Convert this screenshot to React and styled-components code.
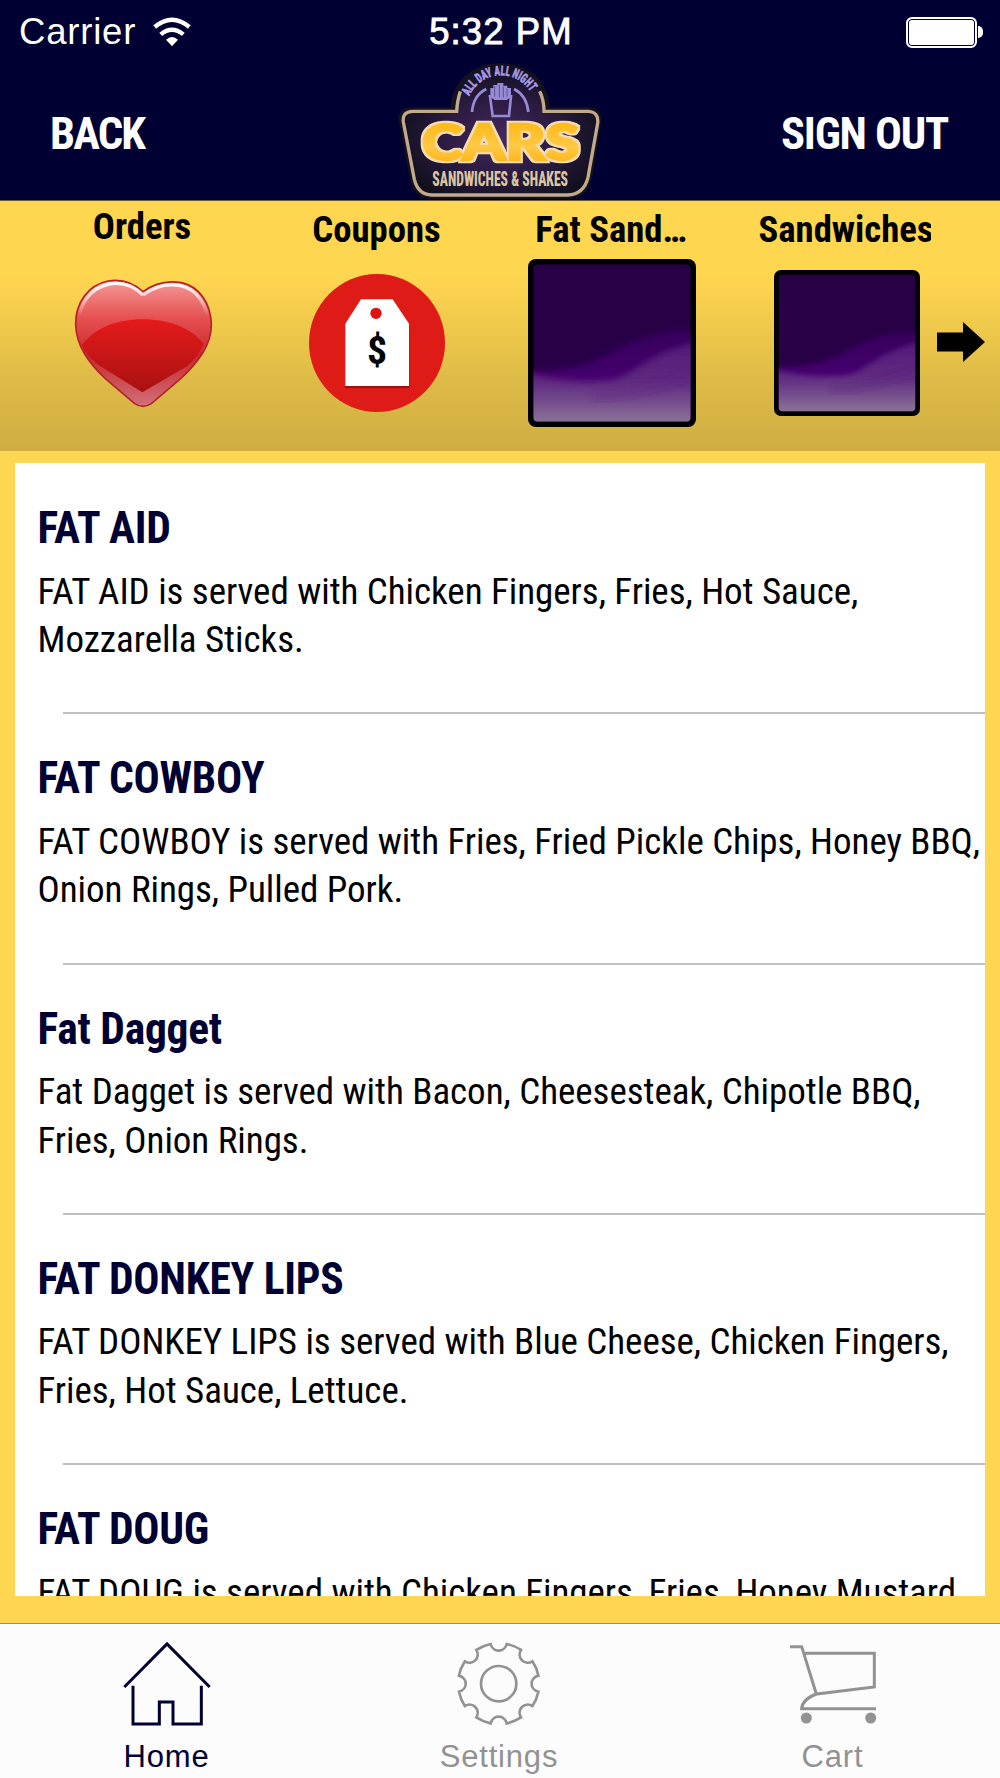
import React from "react";
import styled, { createGlobalStyle } from "styled-components";

const menu = [
  { id: 1, title: "FAT AID", contents: "FAT AID is served with Chicken Fingers, Fries, Hot Sauce, Mozzarella Sticks." },
  { id: 2, title: "FAT COWBOY", contents: "FAT COWBOY is served with Fries, Fried Pickle Chips, Honey BBQ, Onion Rings, Pulled Pork." },
  { id: 3, title: "Fat Dagget", contents: "Fat Dagget is served with Bacon, Cheesesteak, Chipotle BBQ, Fries, Onion Rings." },
  { id: 4, title: "FAT DONKEY LIPS", contents: "FAT DONKEY LIPS is served with Blue Cheese, Chicken Fingers, Fries, Hot Sauce, Lettuce." },
  { id: 5, title: "FAT DOUG", contents: "FAT DOUG is served with Chicken Fingers, Fries, Honey Mustard" },
];

const WifiIcon = () => (
  <svg width="38" height="30" viewBox="461 49 114 90" fill="none" stroke="#fff">
    <path d="M466 79 Q518 35 570 79" strokeWidth="13" />
    <path d="M484 101 Q518 73 552 101" strokeWidth="13" />
    <path d="M500 117 Q518 101 536 117 L518 137 Z" fill="#fff" stroke="none" />
  </svg>
);

const Logo = () => (
  <svg width="240" height="150" viewBox="0 0 720 450">
    <defs>
      <radialGradient id="plate" cx="50%" cy="55%" r="55%">
        <stop offset="0" stopColor="#44295c" />
        <stop offset="0.55" stopColor="#2b1b41" />
        <stop offset="1" stopColor="#11101f" />
      </radialGradient>
      <linearGradient id="gold" gradientUnits="userSpaceOnUse" x1="0" y1="215" x2="0" y2="338">
        <stop offset="0" stopColor="#ffb914" />
        <stop offset="0.6" stopColor="#ffc944" />
        <stop offset="1" stopColor="#ffb61a" />
      </linearGradient>
      <filter id="rim">
        <feMorphology in="SourceAlpha" operator="dilate" radius="5" result="fat" />
        <feFlood floodColor="#f5dcae" />
        <feComposite in2="fat" operator="in" result="cream" />
        <feMerge>
          <feMergeNode in="cream" />
          <feMergeNode in="SourceGraphic" />
        </feMerge>
      </filter>
      <path id="arch" d="M268 139 A 103 103 0 0 1 458 139" />
    </defs>
    <path
      d="M55 205 Q58 172 92 172 H212 C218 90 280 40 361 40 C442 40 504 90 510 172 H630 Q665 174 664 212 L636 385 Q622 446 565 446 H150 Q103 442 92 396 Z"
      fill="#15121f"
    />
    <path d="M72 210 Q72 184 98 184 H228 C234 95 290 52 361 52 C432 52 486 95 492 184 H625 Q655 186 650 218 L624 378 Q614 435 562 435 H156 Q112 431 103 388 Z" fill="url(#plate)" />
    <path
      d="M241 124 Q232 150 230 184 H98 Q66 185 70 216 L103 388 Q114 434 156 435 H562 Q612 433 624 382 L653 220 Q657 186 625 184 H492 Q492 150 479 124"
      fill="none"
      stroke="#c2aa8b"
      strokeWidth="10"
    />
    <text fill="#a79be6" stroke="#a79be6" strokeWidth="1.5" fontFamily="Roboto, sans-serif" fontStretch="75%" fontWeight="800" fontSize="40">
      <textPath href="#arch" textLength="226" lengthAdjust="spacingAndGlyphs">ALL DAY ALL NIGHT</textPath>
    </text>
    <g fill="none" stroke="#978bd6" strokeWidth="8">
      <path d="M276 186 Q280 136 319 117" />
      <path d="M445 186 Q440 136 402 117" />
      <path d="M330 139 H393 L387 198 H338 Z" />
    </g>
    <path d="M331 141 V114 H340 V105 H352 V99 H370 V107 H382 V114 H393 V141 L380 150 H344 Z" fill="#978bd6" />
    <path d="M344 108 V140 M358 104 V142 M370 110 V142 M381 116 V140" stroke="#5e4f96" strokeWidth="3" />
    <text
      x="126"
      y="329"
      textLength="472"
      lengthAdjust="spacingAndGlyphs"
      fontFamily="Lato, sans-serif"
      fontWeight="900"
      fontSize="147"
      fill="url(#gold)"
      stroke="url(#gold)"
      strokeWidth="7"
      filter="url(#rim)"
    >
      CARS
    </text>
    <text
      x="157"
      y="408"
      textLength="407"
      lengthAdjust="spacingAndGlyphs"
      fontFamily="Roboto, sans-serif"
      fontStretch="75%"
      fontWeight="800"
      fontSize="62"
      fill="#dcc6a2"
    >
      SANDWICHES &amp; SHAKES
    </text>
  </svg>
);

const HeartIcon = () => (
  <svg width="141" height="130" viewBox="220 265 423 390">
    <defs>
      <linearGradient id="shell" x1="0" y1="0" x2="0" y2="1">
        <stop offset="0" stopColor="#f49a98" />
        <stop offset="0.3" stopColor="#e65050" />
        <stop offset="0.6" stopColor="#c92a2c" />
        <stop offset="1" stopColor="#d0707a" />
      </linearGradient>
      <linearGradient id="core" x1="0" y1="0" x2="0" y2="1">
        <stop offset="0" stopColor="#e51a1b" />
        <stop offset="1" stopColor="#a91111" />
      </linearGradient>
      <linearGradient id="shine" x1="0" y1="0" x2="0" y2="1">
        <stop offset="0" stopColor="#fff" stopOpacity="0.95" />
        <stop offset="0.35" stopColor="#fff" stopOpacity="0.6" />
        <stop offset="0.8" stopColor="#fff" stopOpacity="0" />
      </linearGradient>
    </defs>
    <path
      d="M430 306 C400 278 362 268 325 274 C265 286 227 340 228 405 C230 470 268 520 318 568 L405 642 Q430 658 455 642 L542 568 C598 515 635 465 635 405 C634 340 598 290 545 279 C505 272 465 280 430 306 Z"
      fill="url(#shell)"
      stroke="#b5222a"
      strokeWidth="5"
    />
    <path
      d="M430 316 C400 286 362 277 328 283 C272 295 236 345 237 405 M430 316 C465 290 505 281 542 288 C590 298 625 345 626 405"
      fill="none"
      stroke="url(#shine)"
      strokeWidth="10"
    />
    <path d="M246 467 C285 415 350 389 430 389 C505 389 575 414 612 463 C600 492 582 512 562 530 L428 608 L300 528 C275 510 256 490 246 467 Z" fill="url(#core)" />
  </svg>
);

const CouponIcon = () => (
  <svg width="136" height="138" viewBox="927 251 408 414">
    <ellipse cx="1131" cy="458" rx="204" ry="207" fill="#df1b17" />
    <path d="M1083 331 H1178 L1228 404 V594 H1035 V404 Z" fill="#a31010" />
    <path d="M1083 327 H1178 L1227 400 V587 H1036 V400 Z" fill="#fff" />
    <circle cx="1128" cy="369" r="17" fill="#df1212" />
    <text x="1131" y="521" textAnchor="middle" fontFamily="Roboto, sans-serif" fontStretch="75%" fontWeight="700" fontSize="119">
      $
    </text>
  </svg>
);

const WaveTile = ({ size, name }) => (
  <svg width={size} height={size} viewBox="0 0 168 168">
    <defs>
      <linearGradient id={name + "band"} gradientUnits="userSpaceOnUse" x1="0" y1="70" x2="0" y2="122">
        <stop offset="0" stopColor="#35005a" />
        <stop offset="1" stopColor="#460070" />
      </linearGradient>
      <linearGradient id={name + "haze"} gradientUnits="userSpaceOnUse" x1="0" y1="84" x2="0" y2="162">
        <stop offset="0" stopColor="#541a7a" />
        <stop offset="0.5" stopColor="#5f2a80" />
        <stop offset="0.75" stopColor="#734c8b" />
        <stop offset="1" stopColor="#8a7196" />
      </linearGradient>
      <filter id={name + "soft"} x="-20%" y="-30%" width="140%" height="160%">
        <feGaussianBlur stdDeviation="3" />
      </filter>
      <clipPath id={name + "clip"}>
        <rect x="5.5" y="5.5" width="157" height="157" rx="4" />
      </clipPath>
    </defs>
    <rect width="168" height="168" rx="8" fill="#000" />
    <g clipPath={`url(#${name}clip)`}>
      <rect width="168" height="168" fill="#280046" />
      <path d="M-8 112 C45 112 60 106 92 89 C122 73 140 70 176 71 V186 H-8 Z" fill={`url(#${name}band)`} filter={`url(#${name}soft)`} />
      <path d="M-8 112 C20 122 65 125 88 120 C112 112 125 90 176 82 V186 H-8 Z" fill={`url(#${name}haze)`} filter={`url(#${name}soft)`} />
      <path d="M65 136 C95 140 125 128 163 116" fill="none" stroke="#5b2480" strokeOpacity="0.3" strokeWidth="10" filter={`url(#${name}soft)`} />
    </g>
  </svg>
);

const ArrowIcon = () => (
  <svg width="48" height="40" viewBox="0 0 48 40">
    <path d="M0 10.5 H26 V0 L48 20 L26 40 V29.5 H0 Z" />
  </svg>
);

const HomeIcon = () => (
  <svg width="88" height="88" viewBox="370 240 264 264" fill="none" stroke="#000033" strokeWidth="9">
    <path d="M374 381 L502 252 L630 381" />
    <path d="M400 377 V492 H479 V426 H520 V492 H605 V377" />
  </svg>
);

// eight teeth, each gap is a half circle cut into the rim
const gearPath = () => {
  const point = (deg) => {
    const a = ((deg - 90) * Math.PI) / 180;
    return `${(121.5 * Math.cos(a)).toFixed(1)} ${(121.5 * Math.sin(a)).toFixed(1)}`;
  };
  let d = `M${point(-11.5)}`;
  for (let i = 0; i < 8; i++) {
    d += ` A25 27 ${i * 45} 0 0 ${point(i * 45 + 11.5)} A121.5 121.5 0 0 1 ${point((i + 1) * 45 - 11.5)}`;
  }
  return d + "Z";
};

const GearIcon = () => (
  <svg width="88" height="88" viewBox="-131 -131 264 264" fill="none" stroke="#929292" strokeWidth="8">
    <path d={gearPath()} />
    <circle r="53" />
  </svg>
);

const CartIcon = () => (
  <svg width="88" height="88" viewBox="266 240 264 264" fill="none" stroke="#929292" strokeWidth="9">
    <path d="M269 260 H304 L348 402 L522 381 V280 H311" />
    <path d="M348 402 Q306 418 304 446 H527" />
    <circle cx="318" cy="474" r="16.5" fill="#929292" stroke="none" />
    <circle cx="511" cy="474" r="16.5" fill="#929292" stroke="none" />
  </svg>
);

const App = () => {
  return (
    <Screen>
      <GlobalStyle />
      <StatusBar>
        <Carrier>
          Carrier
          <WifiIcon />
        </Carrier>
        <Clock>5:32 PM</Clock>
        <Battery>
          <Charge />
          <Cap />
        </Battery>
      </StatusBar>
      <NavBar>
        <NavButton>BACK</NavButton>
        <Logo />
        <NavButton $right>SIGN OUT</NavButton>
      </NavBar>
      <Strip>
        <Category>
          <Label $up>Orders</Label>
          <IconBox $shift="2px"><HeartIcon /></IconBox>
        </Category>
        <Category>
          <Label>Coupons</Label>
          <IconBox><CouponIcon /></IconBox>
        </Category>
        <Category>
          <Label>Fat Sand…</Label>
          <IconBox $shift="2px"><WaveTile size={168} name="fat" /></IconBox>
        </Category>
        <Category>
          <Label $clip>Sandwiches</Label>
          <IconBox $shift="3px"><WaveTile size={146} name="sand" /></IconBox>
        </Category>
        <Next><ArrowIcon /></Next>
      </Strip>
      <Body>
        <List>
          {menu.map((item) => (
            <Card key={item.id}>
              <Title>{item.title}</Title>
              <Text>{item.contents}</Text>
              <Line />
            </Card>
          ))}
        </List>
      </Body>
      <TabBar>
        <Tab $active><HomeIcon />Home</Tab>
        <Tab><GearIcon />Settings</Tab>
        <Tab><CartIcon />Cart</Tab>
      </TabBar>
    </Screen>
  );
};

const GlobalStyle = createGlobalStyle`
  body {
    margin: 0;
    background-color: #ffd651;
  }
  * {
    box-sizing: border-box;
  }
  svg {
    display: block;
    flex-shrink: 0;
  }
`;

const Screen = styled.div`
  display: flex;
  flex-direction: column;
  width: 1000px;
  height: 1778px;
  overflow: hidden;
  background-color: #ffd651;
  font-family: "Roboto Condensed", Roboto, sans-serif;
  font-stretch: 75%;
`;

const StatusBar = styled.div`
  display: grid;
  grid-template-columns: 1fr auto 1fr;
  align-items: center;
  height: 50px;
  padding: 14px 17px 0 19px;
  background-color: #000033;
  color: #ffffff;
  font-family: "Liberation Sans", Arial, sans-serif;
  font-stretch: normal;
  font-size: 36.5px;
  line-height: 36px;
`;

const Carrier = styled.div`
  display: flex;
  align-items: center;
  gap: 17px;
  letter-spacing: 0.8px;
`;

const Clock = styled.div`
  letter-spacing: 1.1px;
  -webkit-text-stroke: 0.9px #ffffff;
`;

const Battery = styled.div`
  display: flex;
  align-items: center;
  justify-content: flex-end;
  gap: 1px;
`;

const Charge = styled.div`
  width: 71px;
  height: 31px;
  border: 2px solid #ffffff;
  border-radius: 6px;
  background-color: #ffffff;
  box-shadow: inset 0 0 0 1px #000033;
`;

const Cap = styled.div`
  width: 5px;
  height: 12px;
  border-radius: 0 6px 6px 0;
  background-color: #ffffff;
`;

const NavBar = styled.div`
  display: grid;
  grid-template-columns: 1fr auto 1fr;
  height: 151px;
  padding: 0 50px;
  background-color: #000033;
  border-bottom: 1px solid #6b5936;
`;

const NavButton = styled.div`
  height: 150px;
  padding-top: 17px;
  padding-right: ${(props) => (props.$right ? "2px" : "0")};
  color: #ffffff;
  font-size: 44.7px;
  font-weight: 700;
  line-height: 134px;
  letter-spacing: ${(props) => (props.$right ? "-1.2px" : "-1.8px")};
  white-space: nowrap;
  text-align: ${(props) => (props.$right ? "right" : "left")};
`;

const Strip = styled.div`
  display: flex;
  height: 250px;
  padding-left: 57px;
  background: linear-gradient(#ffd650 0%, #ffd650 30%, #dfbc47 70%, #cfad41 100%);
`;

const Category = styled.div`
  width: 170px;
  margin-right: 64.5px;
  &:nth-child(4) {
    margin-right: 6.5px;
  }
`;

const Label = styled.div`
  height: 58px;
  padding-top: ${(props) => (props.$up ? "4px" : "7px")};
  overflow: hidden;
  color: #000000;
  font-size: 36.7px;
  font-weight: 700;
  line-height: 43px;
  white-space: nowrap;
  text-align: ${(props) => (props.$clip ? "left" : "center")};
  ${(props) => (props.$clip ? "width: 172px; margin-left: -2px;" : "")}
`;

const IconBox = styled.div`
  display: flex;
  align-items: center;
  justify-content: center;
  height: 168px;
  margin-left: ${(props) => props.$shift || "0"};
`;

const Next = styled.div`
  padding-top: 121px;
`;

const Body = styled.div`
  flex: 1;
  padding: 12px 15.5px 27px 15px;
  min-height: 0;
`;

const List = styled.div`
  height: 100%;
  padding-top: 1px;
  overflow: hidden;
  background-color: #ffffff;
`;

const Card = styled.div`
  display: flex;
  flex-direction: column;
  height: 250.3px;
  padding: 35px 0 0 22.5px;
`;

const Title = styled.h2`
  margin: 0;
  color: #000033;
  font-size: 43.5px;
  font-weight: 700;
  line-height: 60px;
  letter-spacing: -0.25px;
`;

const Text = styled.p`
  flex: 1;
  margin: 8.5px 0 0;
  color: #000000;
  font-size: 37px;
  line-height: 48.5px;
  letter-spacing: -0.04px;
`;

const Line = styled.div`
  height: 2px;
  margin-left: 25px;
  background-color: #c0c0c0;
`;

const TabBar = styled.div`
  display: grid;
  grid-template-columns: 333px 332px 335px;
  height: 155px;
  border-top: 1px solid #a98f42;
  background-color: #fcfcfc;
`;

const Tab = styled.div`
  display: flex;
  flex-direction: column;
  align-items: center;
  padding-top: 16px;
  color: ${(props) => (props.$active ? "#000033" : "#929292")};
  font-family: "Liberation Sans", Arial, sans-serif;
  font-stretch: normal;
  font-size: 31px;
  line-height: 58px;
  letter-spacing: 0.8px;
`;

export default App;
